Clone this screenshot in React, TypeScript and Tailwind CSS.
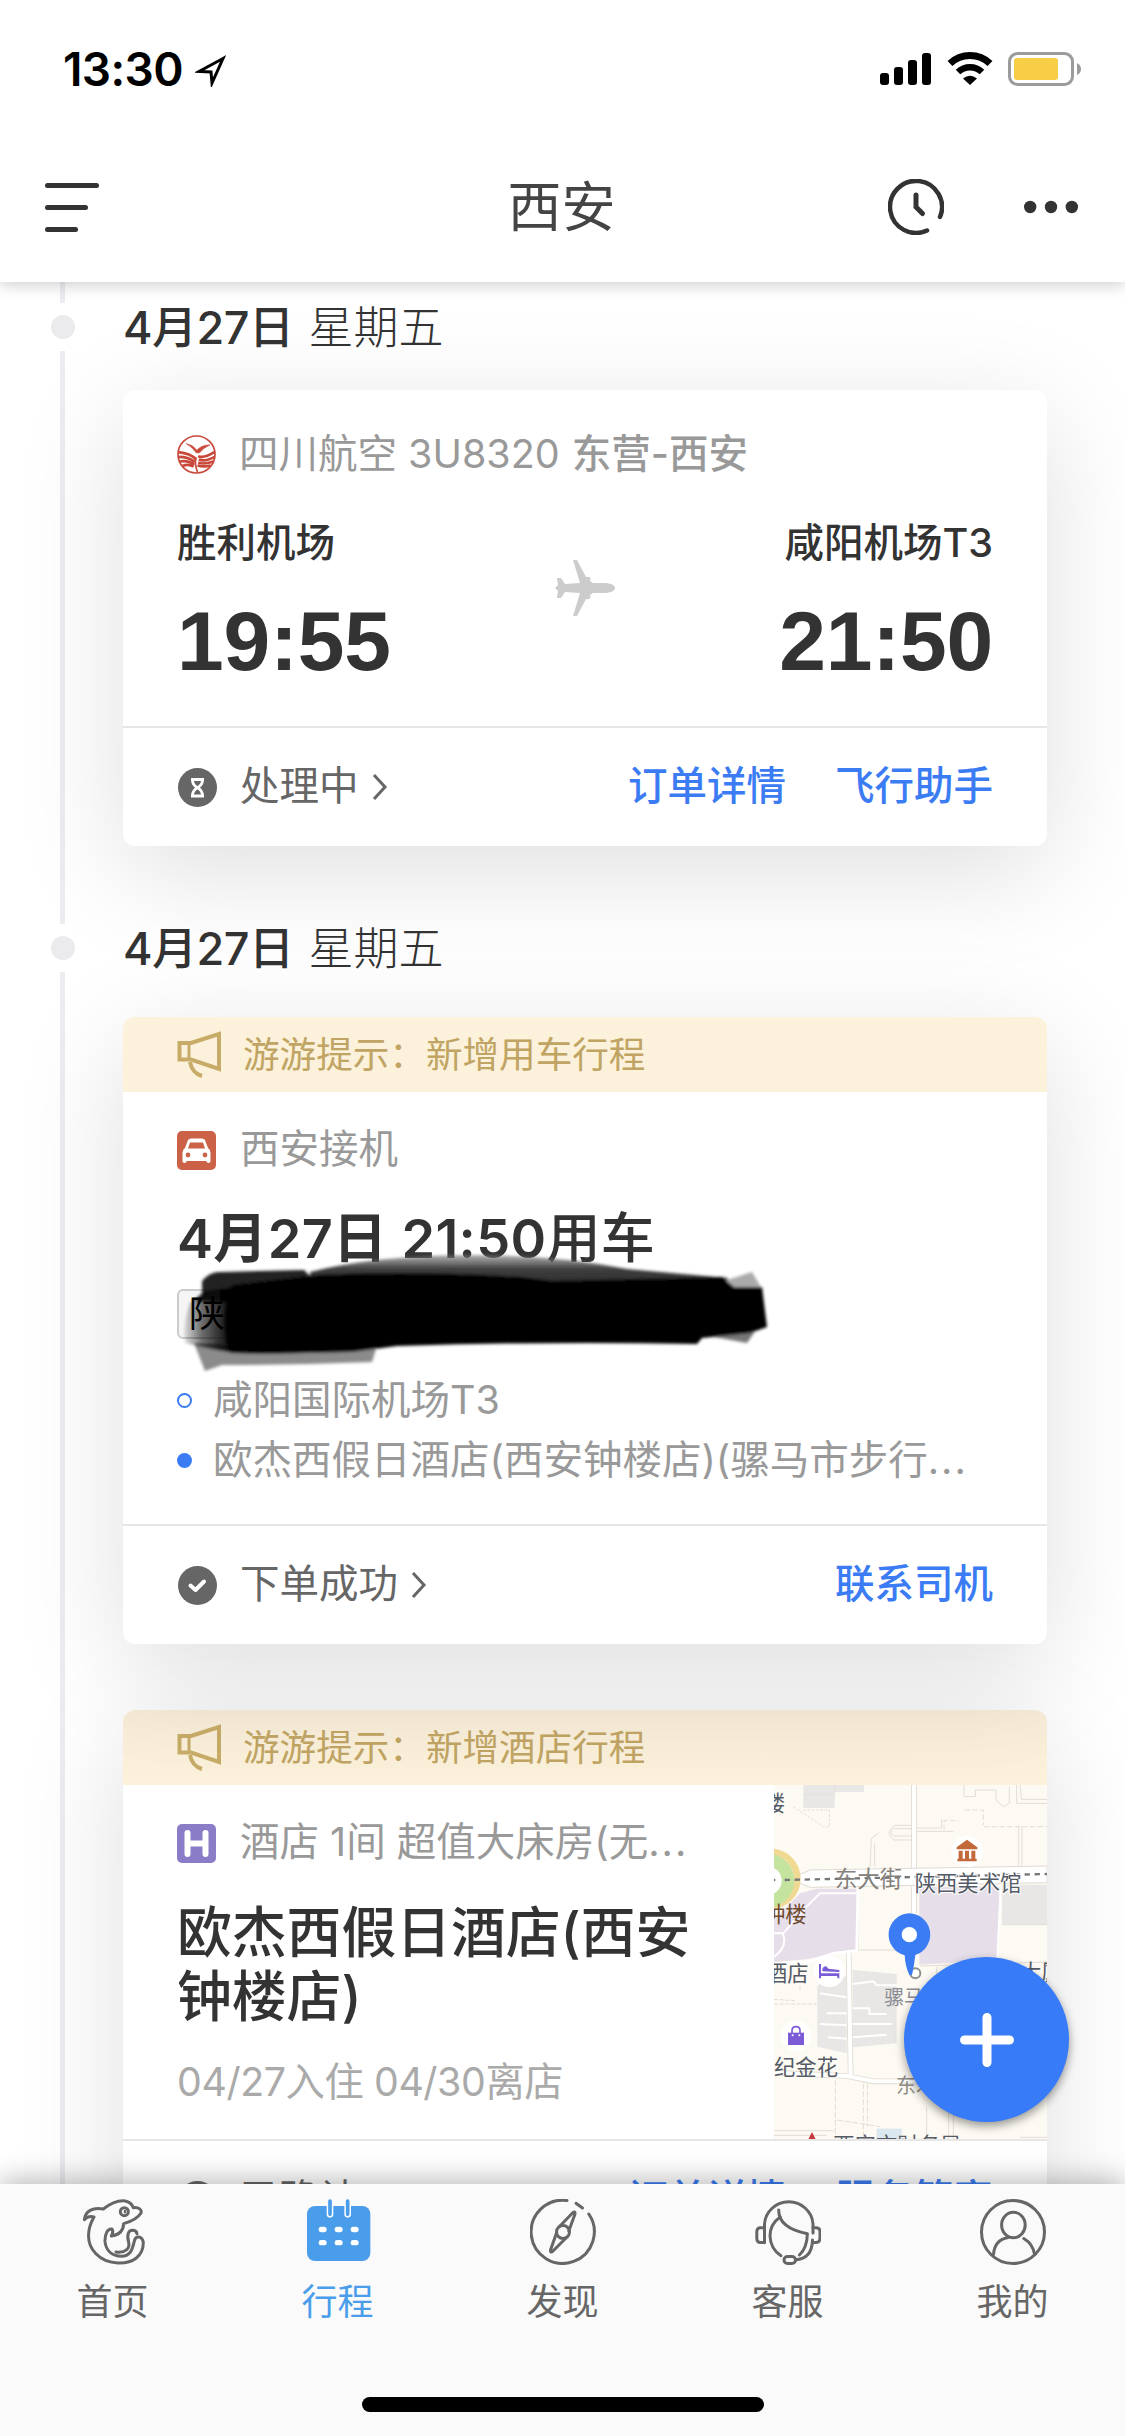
import type { ReactNode } from "react";

const SANS = "font-['Inter','Noto_Sans_CJK_SC',sans-serif]";

function StatusBar() {
    return (
        <div className="flex h-[132px] items-center justify-between pl-[63px] pr-[42px] pt-[6px]">
            <div className="flex items-center">
                <span className="text-[46px] font-semibold leading-none tracking-[-0.6px] text-black">13:30</span>
                <svg className="ml-[12px] mt-[4px]" width="32" height="32" viewBox="0 0 32 32">
                    <path d="M28 3.5 L4 16.5 L16 17 L17 28 Z" fill="none" stroke="#000" strokeWidth="3"
                          strokeLinejoin="miter"/>
                </svg>
            </div>
            <div className="flex items-center">
                <svg width="51" height="34" viewBox="0 0 51 34">
                    <rect x="0" y="21" width="9" height="12" rx="3"/>
                    <rect x="14" y="15" width="9" height="18" rx="3"/>
                    <rect x="28" y="8" width="9" height="25" rx="3"/>
                    <rect x="42" y="1" width="9" height="32" rx="3"/>
                </svg>
                <svg className="ml-[16px]" width="46" height="34" viewBox="0 0 46 34">
                    <path d="M3 11.5 A29 29 0 0 1 43 11.5" fill="none" stroke="#000" strokeWidth="7"/>
                    <path d="M11 20 A17.5 17.5 0 0 1 35 20" fill="none" stroke="#000" strokeWidth="6.5"/>
                    <path d="M23 33 L16 26.5 Q23 21 30 26.5 Z"/>
                </svg>
                <svg className="ml-[15px] mr-[1px]" width="74" height="34" viewBox="0 0 74 34">
                    <rect x="1.5" y="1.5" width="63" height="31" rx="8" fill="none" stroke="#9b9b9b" strokeWidth="3"/>
                    <rect x="6" y="6" width="44" height="22" rx="3" fill="#f7ce46"/>
                    <path d="M69 11 Q73 13 73 17 Q73 21 69 23 Z" fill="#9b9b9b"/>
                </svg>
            </div>
        </div>
    );
}

function Header() {
    return (
        <header className="relative z-20 h-[282px] shrink-0 bg-white shadow-[0_2px_16px_rgba(0,0,0,0.22)]">
            <StatusBar/>
            <div className="flex h-[150px] items-center justify-between pl-[45px] pr-[47px]">
                <div className="flex w-[190px] flex-col gap-[17px]">
                    <span className="h-[5px] w-[54px] rounded-full bg-[#333]"/>
                    <span className="h-[5px] w-[43px] rounded-full bg-[#333]"/>
                    <span className="h-[5px] w-[33px] rounded-full bg-[#333]"/>
                </div>
                <h1 className="pt-[2px] text-[54px] leading-none text-[#444]">西安</h1>
                <div className="flex w-[190px] items-center justify-between">
                    <svg width="56" height="56" viewBox="0 0 56 56" fill="none" stroke="#333" strokeWidth="4.5"
                         strokeLinecap="round">
                        <path d="M39 51.5 A26 26 0 1 1 52 38"/>
                        <path d="M28 16 V28 L34.5 34.5" strokeWidth="5"/>
                    </svg>
                    <svg width="54" height="14" viewBox="0 0 54 14" fill="#333">
                        <circle cx="6.2" cy="7" r="6.2"/>
                        <circle cx="27" cy="7" r="6.2"/>
                        <circle cx="47.8" cy="7" r="6.2"/>
                    </svg>
                </div>
            </div>
        </header>
    );
}

function DateRow({ date, week }: { date: string; week: string }) {
    return (
        <div className="flex h-[48px] items-center">
            <div className="flex h-[48px] w-[24px] items-center bg-white">
                <span className="size-[24px] rounded-full bg-[#ebebed]"/>
            </div>
            <p className="ml-[48px] whitespace-pre text-[45px] leading-none text-[#333]">
                <span className="font-medium tracking-[-0.5px]">{date}</span>
                <span className="ml-[15px] font-light">{week}</span>
            </p>
        </div>
    );
}

function Notice({ text, className }: { text: string; className: string }) {
    return (
        <div className={`flex h-[75px] items-center pl-[54px] text-[36.6px] leading-none text-[#c0a463] ${className}`}>
            <svg width="44" height="48" viewBox="0 0 44 48" fill="none" stroke="#c7ab68" strokeWidth="4">
                <path d="M2.5 12 H14 L42 3 V38 L14 28.5 H2.5 Z"/>
                <path d="M12 13 V28" strokeWidth="3"/>
                <path d="M13 31 Q15 42 25 45"/>
            </svg>
            <span className="ml-[22px] pt-[2px]">{text}</span>
        </div>
    );
}

function CardFooter({ icon, status, links }: { icon: ReactNode; status: string; links: string[] }) {
    return (
        <div className="flex h-[120px] items-center justify-between border-t-2 border-[#e6e6e6] px-[54px] text-[39.5px] leading-none">
            <div className="flex items-center text-[#666]">
                {icon}
                <span className="ml-[22px]">{status}</span>
                <svg className="ml-[12px]" width="18" height="28" viewBox="0 0 18 28" fill="none" stroke="#666"
                     strokeWidth="3">
                    <path d="M3 2 L14 14 L3 26"/>
                </svg>
            </div>
            <div className="flex gap-[49px] font-medium text-[#3b7cf4]">
                {links.map((link) => <span key={link}>{link}</span>)}
            </div>
        </div>
    );
}

function AirlineLogo() {
    return (
        <svg width="39" height="39" viewBox="0 0 118 118" fill="none" stroke="#c8493a">
            <circle cx="59" cy="59" r="56" strokeWidth="5"/>
            <path d="M28 26 Q48 30 60 46 Q74 30 100 30 Q80 38 68 54 L58 54 Q48 38 28 26 Z" fill="#c8493a" strokeWidth="2"/>
            <path d="M5 52 Q40 56 58 74 M4 66 Q38 66 54 82 M8 80 Q36 76 52 90 M16 94 Q36 86 50 96" strokeWidth="8"/>
            <path d="M113 52 Q80 72 64 64 M114 66 Q84 82 66 74 M110 80 Q84 90 64 84 M102 92 Q82 98 62 92" strokeWidth="8"/>
            <path d="M58 68 Q52 86 62 112" strokeWidth="5"/>
        </svg>
    );
}

function HourglassIcon() {
    return (
        <svg width="41" height="39" viewBox="0 0 41 39">
            <circle cx="20.5" cy="19.500" r="19.500" fill="#666"/>
            <path d="M14 11.500 H27 M14 28 H27 M15.500 12 Q15.500 17 20.500 19.700 Q25.500 22.500 25.500 27.500 M25.500 12 Q25.500 17 20.500 19.700 Q15.500 22.500 15.500 27.500"
                  fill="none" stroke="#fff" strokeWidth="2.800"/>
        </svg>
    );
}

function CheckIcon() {
    return (
        <svg width="41" height="39" viewBox="0 0 41 39">
            <circle cx="20.5" cy="19.5" r="19.5" fill="#666"/>
            <path d="M13.500 19.500 L18.500 24 L27 15.500" fill="none" stroke="#fff" strokeWidth="4" strokeLinecap="round"
                  strokeLinejoin="round"/>
        </svg>
    );
}

function FlightCard() {
    return (
        <section className="rounded-[12px] bg-white shadow-[0_26px_110px_rgba(0,0,0,0.13)]">
            <div className="h-[336px] px-[54px] pt-[43px]">
                <div className="flex h-[42px] items-center text-[39.5px] leading-none text-[#999]">
                    <AirlineLogo/>
                    <span className="ml-[23px] pt-[2px]">四川航空 3U8320</span>
                    <span className="ml-[12px] pt-[2px] font-medium">东营-西安</span>
                </div>
                <div className="mt-[43px] flex items-center justify-between text-[#333]">
                    <div>
                        <p className="text-[39.5px] font-medium leading-[50px]">胜利机场</p>
                        <p className="mt-[31px] font-['Liberation_Sans',sans-serif] text-[84px] font-bold leading-[84px] tracking-[-0.2px]">19:55</p>
                    </div>
                    <svg className="mb-[25px]" width="60" height="58" viewBox="0 0 60 58" fill="#ccc">
                        <path d="M0 29 L3 26 L2 19 H6 L10 25 L25 24 L18 1 H22 L31 18 Q37 17 35 22 L38 24 H51 Q60 25 60 29 Q60 33 51 34 H38 L35 36 Q37 41 31 40 L22 57 H18 L25 34 L10 33 L6 39 H2 L3 32 Z"/>
                    </svg>
                    <div className="text-right">
                        <p className="text-[39.5px] font-medium leading-[50px]">咸阳机场T3</p>
                        <p className="mt-[31px] font-['Liberation_Sans',sans-serif] text-[84px] font-bold leading-[84px] tracking-[-0.2px]">21:50</p>
                    </div>
                </div>
            </div>
            <CardFooter icon={<HourglassIcon/>} status="处理中" links={["订单详情", "飞行助手"]}/>
        </section>
    );
}

// hand drawn marker strokes that hide the plate number
function Marker() {
    return (
        <svg className="absolute left-[49px] top-[218px]" width="604" height="150" viewBox="0 0 604 150">
            <defs>
                <filter id="soft" x="-5%" y="-10%" width="110%" height="120%">
                    <feGaussianBlur stdDeviation="1.8"/>
                </filter>
                <linearGradient id="dome" x1="0" y1="0" x2="0" y2="1">
                    <stop offset="0" stopColor="#777" stopOpacity="0.6"/>
                    <stop offset="0.35" stopColor="#3d3d3d"/>
                    <stop offset="1" stopColor="#222"/>
                </linearGradient>
                <linearGradient id="edge" gradientUnits="userSpaceOnUse" x1="12" y1="0" x2="62" y2="0">
                    <stop offset="0" stopColor="#000" stopOpacity="0.1"/>
                    <stop offset="0.35" stopColor="#000" stopOpacity="0.55"/>
                    <stop offset="0.7" stopColor="#000" stopOpacity="0.8"/>
                    <stop offset="1" stopColor="#000"/>
                </linearGradient>
            </defs>
            <g filter="url(#soft)">
                <path d="M138 37 Q205 20 300 20 Q385 20 455 34 L556 43 L550 60 H140 Z" fill="url(#dome)"/>
                <path d="M22 108 L33 136 L50 130 Q120 130 200 127 L204 114 L150 110 Z" fill="#8b8b8b"/>
                <path d="M552 46 L580 37 L590 54 L560 60 Z" fill="#aaa"/>
                <path d="M520 98 L575 108 L586 92 Z" fill="#777"/>
                <path d="M30 60 L30 46 Q38 36 50 37 L132 35 L145 48 L120 70 L22 66 Z" fill="#222"/>
                <path d="M13 108 Q10 90 18 68 L32 56 L62 52 L62 118 Q36 114 13 108 Z" fill="url(#edge)"/>
                <path d="M60 50 L145 40 Q240 35 350 42 L380 46 L550 42 L562 52 L590 52 L595 92 L578 98 L530 103 L525 109 Q380 106 225 111 L180 117 L90 119 L58 118 Q46 84 60 50 Z" fill="#050505"/>
            </g>
        </svg>
    );
}

function CarCard() {
    return (
        <section className="relative rounded-[12px] bg-white shadow-[0_26px_110px_rgba(0,0,0,0.13)]">
            <Notice text="游游提示：新增用车行程" className="rounded-t-[12px] bg-[#fcf1da]"/>
            <div className="h-[432px] px-[54px] pt-[37px]">
                <div className="flex h-[42px] items-center text-[39.5px] leading-none text-[#999]">
                    <svg width="39" height="39" viewBox="0 0 39 39">
                        <rect width="39" height="39" rx="5" fill="#cb6248"/>
                        <path d="M11 9 Q12 7.5 14 7.5 H25 Q27 7.5 28 9 L31 17 Q33.5 18.5 33.5 22 V30 Q33.5 32 31.5 32 Q29.5 32 29.3 30 H9.7 Q9.5 32 7.5 32 Q5.5 32 5.5 30 V22 Q5.5 18.5 8 17 Z" fill="#fff"/>
                        <path d="M13 11.5 H26 L28 17.5 H11 Z" fill="#cb6248"/>
                        <circle cx="11" cy="24" r="2.4" fill="#cb6248"/>
                        <circle cx="28" cy="24" r="2.4" fill="#cb6248"/>
                    </svg>
                    <span className="ml-[24px]">西安接机</span>
                </div>
                <h2 className="mt-[36px] text-[54px] font-semibold leading-[64px] tracking-[0.35px] text-[#333]">
                    4月27日 21:50<span className="font-medium">用车</span>
                </h2>
                <div className="mt-[18px] flex h-[50px] w-[180px] items-center rounded-[6px] border-2 border-[#ccc] bg-[#f5f5f5] pl-[10px] text-[36px] leading-none">
                    <span className="relative z-10 text-black">陕</span>
                </div>
                <ul className="mt-[31px] text-[39.5px] leading-[60px] text-[#999]">
                    <li className="flex items-center">
                        <span className="mr-[21px] size-[15px] rounded-full border-2 border-[#3b7cf4]"/>
                        咸阳国际机场T3
                    </li>
                    <li className="flex items-center">
                        <span className="mr-[21px] size-[15px] rounded-full bg-[#3b7cf4]"/>
                        欧杰西假日酒店(西安钟楼店)(骡马市步行<span className="tracking-[2px]">...</span>
                    </li>
                </ul>
            </div>
            <CardFooter icon={<CheckIcon/>} status="下单成功" links={["联系司机"]}/>
            <Marker/>
        </section>
    );
}

function HotelMap() {
    return (
        <svg width="273" height="354" viewBox="102 75 819 1062" className="block shrink-0 font-['Noto_Sans_CJK_SC',sans-serif]">
            <rect x="102" y="75" width="819" height="1062" fill="#fdfaf3"/>
            <g fill="#e9e7e5">
                <path d="M190 75 H284 V144 H190 Z M284 75 H372 V96 H284 Z"/>
                <path d="M786 374 H921 V492 H786 Z"/>
                <path d="M262 640 L320 650 V880 L232 860 V680 Z"/>
                <path d="M338 630 L470 642 V850 L338 862 Z"/>
            </g>
            <g fill="#e6dfea">
                <path d="M102 480 L180 400 L230 386 H350 V570 L290 578 L200 598 L102 606 Z"/>
                <path d="M538 380 H780 L770 600 L538 614 Z"/>
            </g>
            <rect x="410" y="1106" width="75" height="31" fill="#dbe8f0"/>
            {/* minor roads */}
            <g fill="none" stroke="#e3ddd5" strokeWidth="3">
                <path d="M672 75 V110 H706 V90 H768 V120 L790 140 L808 130 V80"/>
                <path d="M830 75 V130 H921 M840 75 L844 118 H921"/>
                <path d="M190 104 H284 V75 M160 140 L250 200 H268 V150 H190" strokeDasharray="8 5"/>
                <path d="M732 200 H921 M674 150 H730 V195 M612 210 V182 H655" strokeDasharray="16 7"/>
                <path d="M516 196 H465 Q432 218 462 240 H516 M516 206 H462 Q446 218 462 228 H516"/>
                <path d="M530 204 H605 V178 M530 214 H640"/>
                <path d="M390 320 L394 235 L415 220 M404 320 V250"/>
                <path d="M836 200 V316 M846 200 V316"/>
                <path d="M102 732 H230 M102 718 L165 722 M180 680 V700" strokeDasharray="12 5"/>
                <path d="M286 960 V1137 M370 970 V1137 M382 970 V1100 M290 1080 L420 1100" strokeDasharray="18 6"/>
                <path d="M102 1112 H280 M102 1126 H260 M840 1132 H921"/>
                <path d="M626 1060 V1137 M640 1060 V1137 M560 1040 V1137"/>
                <path d="M590 620 V680 M540 618 L921 606 M786 494 H921 M354 380 V570 H480"/>
            </g>
            {/* streets */}
            <g fill="none" stroke="#e0dad2" strokeWidth="17">
                <path d="M522 75 V325 M522 380 V460"/>
                <path d="M326 575 L332 950"/>
                <path d="M102 938 L320 948 L400 964 H560"/>
            </g>
            <g fill="none" stroke="#fff" strokeWidth="12">
                <path d="M522 70 V330 M522 375 V470"/>
                <path d="M326 570 L332 950"/>
                <path d="M102 938 L320 948 L400 964 H560"/>
                <path d="M102 612 L210 604 L280 580 L350 572 L354 382" strokeWidth="8"/>
                <path d="M782 380 L772 600 M102 520 H130 L200 440 L240 400 H350 M128 520 Q145 560 102 590" strokeWidth="6"/>
                <path d="M240 700 L320 712 M260 760 H320 M240 792 L320 796 M265 832 L320 836 M338 672 L400 664 L410 676 H470 M338 745 H388 V762 H440 M338 792 H455 M338 832 L440 824" strokeWidth="6"/>
            </g>
            <path d="M165 350 L210 330 L921 318 V368 L540 376 L210 382 L170 366 Z" fill="#fff" stroke="#e0dad2"
                  strokeWidth="3"/>
            <circle cx="92" cy="356" r="80" fill="none" stroke="#f0d993" strokeWidth="20"/>
            <circle cx="82" cy="362" r="62" fill="#fff" stroke="#c3e39f" strokeWidth="38"/>
            <path d="M102 360 H106 M134 360 L921 342" stroke="#777" strokeWidth="7" strokeDasharray="16 14"/>
            <g fontSize="64" fill="#555b66">
                <text x="71" y="152">楼</text>
                <text x="524" y="392" stroke="#fff" strokeWidth="6" paintOrder="stroke">陕西美术馆</text>
                <text x="285" y="380" fill="#84807a" fontSize="67">东大街</text>
                <text x="72" y="487" fill="#6e4a2e">钟楼</text>
                <text x="78" y="662">酒店</text>
                <text x="432" y="734" fontSize="60" fill="#8c8c94">骡马市</text>
                <text x="102" y="946">纪金花</text>
                <text x="468" y="998" fontSize="60" fill="#8f8c86">东木</text>
                <text x="280" y="1180">西安市财务局</text>
                <text x="840" y="660">大厦</text>
            </g>
            <circle cx="681" cy="274" r="47" fill="#fff"/>
            <path d="M681 239 L712 262 V268 H650 V262 Z M656 272 H668 V296 H656 Z M675 272 H687 V296 H675 Z M694 272 H706 V296 H694 Z M652 296 H710 V304 H652 Z"
                  fill="#c2683b"/>
            <circle cx="268" cy="634" r="47" fill="#fff"/>
            <path d="M237 612 H243 V640 H298 V655 H292 V648 H243 V655 H237 Z M247 634 V626 Q256 612 265 626 L298 630 V636 Z" fill="#7b5bd6"/>
            <circle cx="168" cy="828" r="45" fill="#fff"/>
            <path d="M144 818 H192 V855 H144 Z" fill="#7b5bd6"/>
            <path d="M156 820 V812 Q156 800 168 800 Q180 800 180 812 V820" fill="none" stroke="#7b5bd6" strokeWidth="5"/>
            <circle cx="158" cy="826" r="3" fill="#fff"/>
            <circle cx="178" cy="826" r="3" fill="#fff"/>
            <path d="M216 1116 L228 1140 H204 Z" fill="#c9343c"/>
            <circle cx="526" cy="640" r="15" fill="#fff" stroke="#909090" strokeWidth="6"/>
            <path d="M508 460 A64 64 0 0 1 526 585 Q522 620 516 645 L508 645 Q496 620 494 586 A64 64 0 0 1 508 460 Z" fill="#3b7cf4"/>
            <circle cx="508" cy="524" r="23" fill="#fff"/>
        </svg>
    );
}

function HotelCard() {
    return (
        <section className="rounded-[12px] bg-white shadow-[0_26px_110px_rgba(0,0,0,0.13)]">
            <Notice text="游游提示：新增酒店行程" className="rounded-t-[12px] bg-linear-to-b from-[#f6ebd7] to-[#fcf1da]"/>
            <div className="flex h-[354px] justify-between">
                <div className="pl-[54px] pt-[37px]">
                    <div className="flex h-[42px] items-center whitespace-pre text-[39.5px] leading-none text-[#999]">
                        <svg width="39" height="39" viewBox="0 0 39 39">
                            <rect width="39" height="39" rx="5" fill="#8b7cc8"/>
                            <path d="M10.5 9 V30 M28.5 9 V30 M10.5 19.5 H28.5" stroke="#fff" strokeWidth="6"
                                  strokeLinecap="round"/>
                        </svg>
                        <span className="ml-[24px]">酒店 1间 超值大床房(无<span className="tracking-[2px]">...</span></span>
                    </div>
                    <h2 className="mt-[36px] w-[530px] text-[54.8px] font-medium leading-[64px] text-[#333]">
                        欧杰西假日酒店(西安<br/>钟楼店)
                    </h2>
                    <p className="mt-[30px] text-[39.3px] leading-[48px] tracking-[-0.4px] text-[#aaa]">04/27入住 04/30离店</p>
                </div>
                <HotelMap/>
            </div>
            <CardFooter icon={<CheckIcon/>} status="已确认" links={["订单详情", "服务管家"]}/>
        </section>
    );
}

const TABS: { label: string; active?: boolean; icon: ReactNode }[] = [
    {
        label: "首页",
        icon: (
            <svg width="66" height="66" viewBox="28 42 198 198" fill="none" stroke="#666" strokeWidth="9"
                 strokeLinejoin="round" strokeLinecap="round">
                <path d="M41 104 C44 78 66 66 98 72 C115 58 135 46 160 47 C175 49 184 56 188 68 C205 66 214 74 211 84 C200 102 180 110 159 116 C158 140 145 150 122 153 C126 146 128 138 124 132 C112 130 102 145 103 170 C106 198 125 213 152 214 C185 212 186 185 192 165 C196 152 214 152 218 172 C218 215 185 236 142 234 C85 232 50 190 54 145 C55 125 62 110 70 96 C58 93 48 96 41 104 Z"/>
                <path d="M136 201 C165 205 178 190 174 172 C168 150 172 136 186 136 C194 136 198 140 199 146"/>
                <circle cx="161" cy="80" r="12"/>
                <path d="M163 78 V82" strokeWidth="7"/>
            </svg>
        ),
    },
    {
        label: "行程",
        active: true,
        icon: (
            <svg width="66" height="66" viewBox="705 42 198 198">
                <rect x="711" y="63" width="190" height="165" rx="24" fill="#4a9deb"/>
                <path d="M780 50 V88 M833 50 V88" stroke="#fff" strokeWidth="20" strokeLinecap="round"/>
                <rect x="765" y="40" width="85" height="22" fill="#fafafa"/>
                <path d="M780 48 V88 M833 48 V88" stroke="#4a9deb" strokeWidth="11" strokeLinecap="round"/>
                <path d="M754 133.5 H762 M802 133.5 H810 M850 133.5 H858 M754 173 H762 M802 173 H810 M850 173 H858"
                      stroke="#fff" strokeWidth="16" strokeLinecap="round"/>
            </svg>
        ),
    },
    {
        label: "发现",
        icon: (
            <svg width="66" height="66" viewBox="0 0 66 66" fill="none" stroke="#666" strokeWidth="3"
                 strokeLinecap="round" strokeLinejoin="round">
                <path d="M37 1.5 A31.6 31.6 0 1 0 58.8 15"/>
                <path d="M46 4.3 L52.5 9"/>
                <circle cx="33" cy="33" r="6.5"/>
                <path d="M29.5 27.5 L42.5 14 Q45.5 11.5 45 15 L38.8 32"/>
                <path d="M26.7 33.5 L20.5 51 Q20 54.5 23 52 L36 39"/>
            </svg>
        ),
    },
    {
        label: "客服",
        icon: (
            <svg width="66" height="66" viewBox="0 0 66 66" fill="none" stroke="#666" strokeWidth="3"
                 strokeLinecap="round" strokeLinejoin="round">
                <path d="M9.5 43.5 V25 A24.3 23.7 0 0 1 58 25 V34"/>
                <path d="M9.5 28.7 H5.5 Q1.8 28.7 1.8 33 V39 Q1.8 43.5 5.5 43.5 H9.5"/>
                <path d="M58 28.7 H61 Q65 28.7 65 33 V39 Q65 43.5 61 43.5 H58"/>
                <path d="M23.7 11 Q23.5 29 52.4 34.7 Q52 49 44.4 56"/>
                <path d="M25.3 18 Q15 25 15 37 Q15.5 50 26 56.7"/>
                <rect x="29" y="57.5" width="11.5" height="7" rx="3.5"/>
                <path d="M40.5 60.7 Q57 60 57.5 41"/>
            </svg>
        ),
    },
    {
        label: "我的",
        icon: (
            <svg width="66" height="66" viewBox="0 0 66 66" fill="none" stroke="#666" strokeWidth="3"
                 strokeLinecap="round">
                <circle cx="33" cy="33" r="31.5"/>
                <ellipse cx="33.4" cy="26" rx="11.8" ry="12.8"/>
                <path d="M13.5 55.5 Q14.5 41 28 38.5 M43.8 39.5 Q53 45 54.6 55.5"/>
            </svg>
        ),
    },
];

function TabBar() {
    return (
        <nav className="relative z-20 flex h-[252px] shrink-0 flex-col items-center justify-between bg-[#fafafa] pb-[24px] pt-[15px] shadow-[0_-4px_26px_rgba(0,0,0,0.28)]">
            <div className="flex w-full">
                {TABS.map((tab) => (
                    <div key={tab.label} className="flex flex-1 flex-col items-center">
                        {tab.icon}
                        <span className={`mt-[17px] text-[36px] leading-[40px] ${tab.active ? "text-[#4a9deb]" : "text-[#666]"}`}>
                            {tab.label}
                        </span>
                    </div>
                ))}
            </div>
            <div className="h-[15px] w-[402px] rounded-full bg-black"/>
        </nav>
    );
}

export default function App() {
    return (
        <div className={`relative flex h-[2436px] w-[1125px] flex-col overflow-hidden bg-white ${SANS}`}>
            <Header/>
            <main className="relative h-[1902px] overflow-hidden">
                <div className="absolute left-[60px] top-0 h-full w-[5px] bg-[#ededf1]"/>
                <div className="relative pl-[51px] pr-[78px] pt-[21px]">
                    <DateRow date="4月27日" week="星期五"/>
                    <div className="ml-[72px] mt-[39px]">
                        <FlightCard/>
                    </div>
                    <div className="relative mt-[78px]">
                        <DateRow date="4月27日" week="星期五"/>
                    </div>
                    <div className="ml-[72px] mt-[45px] flex flex-col gap-[66px]">
                        <CarCard/>
                        <HotelCard/>
                    </div>
                </div>
            </main>
            <button className="absolute left-[904px] top-[1957px] z-10 flex size-[165px] items-center justify-center rounded-full bg-[#377bf8] shadow-[0_4px_10px_rgba(0,0,0,0.4)]">
                <svg width="54" height="54" viewBox="0 0 54 54" stroke="#fff" strokeWidth="9" strokeLinecap="round">
                    <path d="M27 4.5 V49.5 M4.5 27 H49.5"/>
                </svg>
            </button>
            <TabBar/>
        </div>
    );
}
